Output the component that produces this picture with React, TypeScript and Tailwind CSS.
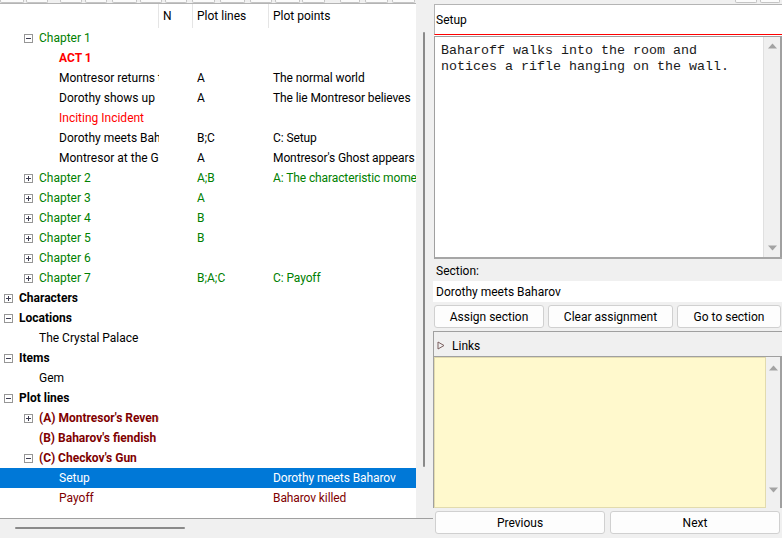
import React from "react";

type Row = {
  level: 0 | 1 | 2;
  exp?: "plus" | "minus";
  text: string;
  color: string;
  bold?: boolean;
  c3?: string;
  c4?: string;
  selected?: boolean;
};

const G = "text-[#008000]";
const R = "text-[#ff0000]";
const M = "text-[#800000]";
const K = "text-black";

const rows: Row[] = [
  { level: 1, exp: "minus", text: "Chapter 1", color: G },
  { level: 2, text: "ACT 1", color: R, bold: true },
  { level: 2, text: "Montresor returns to the city", color: K, c3: "A", c4: "The normal world" },
  { level: 2, text: "Dorothy shows up", color: K, c3: "A", c4: "The lie Montresor believes" },
  { level: 2, text: "Inciting Incident", color: R },
  { level: 2, text: "Dorothy meets Baharov", color: K, c3: "B;C", c4: "C: Setup" },
  { level: 2, text: "Montresor at the Gate", color: K, c3: "A", c4: "Montresor's Ghost appears" },
  { level: 1, exp: "plus", text: "Chapter 2", color: G, c3: "A;B", c4: "A: The characteristic moment" },
  { level: 1, exp: "plus", text: "Chapter 3", color: G, c3: "A" },
  { level: 1, exp: "plus", text: "Chapter 4", color: G, c3: "B" },
  { level: 1, exp: "plus", text: "Chapter 5", color: G, c3: "B" },
  { level: 1, exp: "plus", text: "Chapter 6", color: G },
  { level: 1, exp: "plus", text: "Chapter 7", color: G, c3: "B;A;C", c4: "C: Payoff" },
  { level: 0, exp: "plus", text: "Characters", color: K, bold: true },
  { level: 0, exp: "minus", text: "Locations", color: K, bold: true },
  { level: 1, text: "The Crystal Palace", color: K },
  { level: 0, exp: "minus", text: "Items", color: K, bold: true },
  { level: 1, text: "Gem", color: K },
  { level: 0, exp: "minus", text: "Plot lines", color: K, bold: true },
  { level: 1, exp: "plus", text: "(A) Montresor's Revenge", color: M, bold: true },
  { level: 1, text: "(B) Baharov's fiendish plan", color: M, bold: true },
  { level: 1, exp: "minus", text: "(C) Checkov's Gun", color: M, bold: true },
  { level: 2, text: "Setup", color: K, c4: "Dorothy meets Baharov", selected: true },
  { level: 2, text: "Payoff", color: M, c4: "Baharov killed" },
];

const indent = ["w-[0px]", "w-[20px]", "w-[40px]"];

function Expander({ kind }: { kind: "plus" | "minus" }) {
  return (
    <svg width="9" height="9" viewBox="0 0 9 9" className="block">
      <rect x="0.5" y="0.5" width="8" height="8" fill="#ffffff" stroke="#969696" />
      <line x1="2" y1="4.5" x2="7" y2="4.5" stroke="#3c3c50" />
      {kind === "plus" && <line x1="4.5" y1="2" x2="4.5" y2="7" stroke="#3c3c50" />}
    </svg>
  );
}

function Up() {
  return (
    <svg width="9" height="6" viewBox="0 0 9 6" className="block">
      <polygon points="4.5,0.5 9,5.5 0,5.5" fill="#a3a3a3" />
    </svg>
  );
}
function Down() {
  return (
    <svg width="9" height="6" viewBox="0 0 9 6" className="block">
      <polygon points="0,0.5 9,0.5 4.5,5.5" fill="#a3a3a3" />
    </svg>
  );
}

const stripBoxes = [
  [0, 24], [26, 48], [60, 82], [85, 107], [112, 137], [140, 162], [165, 187], [192, 215],
  [220, 245], [250, 272], [275, 300], [302, 325], [340, 360], [365, 388], [392, 415],
];

export default function App() {
  const font = { fontFamily: "Roboto, 'Noto Sans', sans-serif" };
  return (
    <div
      className="w-[782px] h-[538px] bg-[#f0f0f0] flex flex-col overflow-hidden text-[12px] text-black"
      style={font}
    >
      {/* top strip */}
      <div className="h-[3px] flex relative shrink-0">
        <div className="flex h-[3px] w-[735px]">
          {stripBoxes.map(([a, b], i) => {
            const prev = i === 0 ? 0 : stripBoxes[i - 1][1];
            return (
              <div
                key={i}
                className="h-[3px] border-b border-l border-r border-[#c4c4c4] rounded-b-[2px] bg-[#fbfbfb]"
                style={{ marginLeft: a - prev, width: b - a }}
              />
            );
          })}
        </div>
        <div className="h-[3px] w-[22px] border-b border-l border-r border-[#c4c4c4] rounded-b-[2px] bg-[#fbfbfb]" />
        <div className="h-[3px] w-[20px] ml-[3px] border-b border-l border-r border-[#c4c4c4] rounded-b-[2px] bg-[#fbfbfb]" />
      </div>

      <div className="flex h-[535px]">
        {/* left */}
        <div className="w-[433px] flex flex-col shrink-0">
          <div className="flex h-[516px] border-b border-[#a0a0a0]">
            <div className="w-[416px] bg-white border-t border-[#b4b4b4] flex flex-col overflow-hidden">
              {/* header */}
              <div className="h-[24px] flex shrink-0">
                <div className="w-[158px]" />
                <div className="w-[34px] border-l border-[#e5e5e5] pl-[4px] flex items-center">N</div>
                <div className="w-[76px] border-l border-[#e5e5e5] pl-[4px] flex items-center">Plot lines</div>
                <div className="flex-1 border-l border-[#e5e5e5] pl-[4px] flex items-center">Plot points</div>
              </div>
              {rows.map((r, i) => {
                const sel = r.selected;
                const col = sel ? "text-white" : r.color;
                return (
                  <div
                    key={i}
                    className={`h-[20px] flex items-center shrink-0 ${sel ? "bg-[#0078d7]" : ""}`}
                  >
                    <div className="w-[159px] flex items-center overflow-hidden whitespace-nowrap shrink-0">
                      <div className={`${indent[r.level]} shrink-0`} />
                      <div className="w-[19px] pl-[4px] shrink-0 flex items-center">
                        {r.exp && <Expander kind={r.exp} />}
                      </div>
                      <span className={`${col} ${r.bold ? "font-bold" : ""}`}>{r.text}</span>
                    </div>
                    <div className="w-[33px] shrink-0" />
                    <div className={`w-[76px] pl-[5px] shrink-0 whitespace-nowrap overflow-hidden ${col}`}>
                      {r.c3 ?? ""}
                    </div>
                    <div className={`flex-1 pl-[5px] whitespace-nowrap overflow-hidden tracking-[-0.1px] ${col}`}>
                      {r.c4 ?? ""}
                    </div>
                  </div>
                );
              })}
            </div>
            <div className="w-[17px] flex pt-[29px]">
              <div className="ml-[7px] w-[2px] h-[435px] bg-[#8a8a8a] rounded-full" />
            </div>
          </div>
          <div className="h-[18px] pt-[8px] pl-[15px]">
            <div className="w-[170px] h-[2px] bg-[#8a8a8a] rounded-full" />
          </div>
        </div>

        {/* right */}
        <div className="w-[349px] flex flex-col overflow-hidden shrink-0">
          <div className="h-[1px]" />
          <div className="ml-[1px] w-[360px] h-[31px] bg-white border-t border-l border-[#b4b4b4] border-b border-b-[#ff0000] pl-[1px] flex items-center shrink-0">
            Setup
          </div>
          <div className="ml-[1px] h-[1px] bg-white shrink-0" />
          <div className="ml-[1px] h-[223px] flex border-t border-l border-[#a0a0a0] border-b-2 border-b-[#a6a6a6] shrink-0">
            <div
              className="flex-1 bg-white border-r border-[#e0e0e0] pl-[6px] pt-[6px] text-[13.33px] leading-[16px] text-[#1a1a1a]"
              style={{ fontFamily: "'Liberation Mono', 'Courier New', monospace" }}
            >
              Baharoff walks into the room and
              <br />
              notices a rifle hanging on the wall.
            </div>
            <div className="w-[16px] flex flex-col items-center justify-between pt-[6px] pb-[6px]">
              <Up />
              <Down />
            </div>
            <div className="w-[2px] bg-[#a0a0a0]" />
          </div>
          <div className="h-[22px] pl-[3px] pt-[1px] flex items-center shrink-0">Section:</div>
          <div className="h-[21px] bg-white pl-[3px] flex items-center shrink-0">Dorothy meets Baharov</div>
          <div className="h-[3px] shrink-0" />
          <div className="h-[23px] ml-[1px] flex gap-[4px] shrink-0">
            <div className="w-[110px] shrink-0 bg-[#fdfdfd] border border-[#d0d0d0] rounded-[3px] flex items-center justify-center">
              Assign section
            </div>
            <div className="w-[125px] shrink-0 bg-[#fdfdfd] border border-[#d0d0d0] rounded-[3px] flex items-center justify-center">
              Clear assignment
            </div>
            <div className="w-[104px] shrink-0 bg-[#fdfdfd] border border-[#d0d0d0] rounded-[3px] flex items-center justify-center">
              Go to section
            </div>
          </div>
          <div className="h-[3px] shrink-0" />
          <div className="flex flex-col border-l border-t border-[#a0a0a0] shrink-0">
            <div className="h-[25px] flex items-center border-b border-[#a0a0a0] pl-[3px] pt-[3px]">
              <svg width="8" height="9" viewBox="0 0 8 9" className="block">
                <polygon points="1,1 7,4.5 1,8" fill="none" stroke="#7a5f5f" strokeWidth="1" />
              </svg>
              <span className="ml-[7px]">Links</span>
            </div>
            <div className="h-[151px] flex">
              <div className="flex-1 bg-[#fff9cd] border border-[#e2dbae]" />
              <div className="w-[14px] flex flex-col items-center justify-between pt-[8px] pb-[15px]">
                <Up />
                <Down />
              </div>
              <div className="w-[2px] bg-[#a0a0a0]" />
            </div>
          </div>
          <div className="h-[3px] shrink-0" />
          <div className="h-[23px] ml-[2px] flex gap-[5px] shrink-0">
            <div className="w-[170px] shrink-0 bg-[#fdfdfd] border border-[#d0d0d0] rounded-[3px] flex items-center justify-center">
              Previous
            </div>
            <div className="w-[170px] shrink-0 bg-[#fdfdfd] border border-[#d0d0d0] rounded-[3px] flex items-center justify-center">
              Next
            </div>
          </div>
        </div>
      </div>
    </div>
  );
}
